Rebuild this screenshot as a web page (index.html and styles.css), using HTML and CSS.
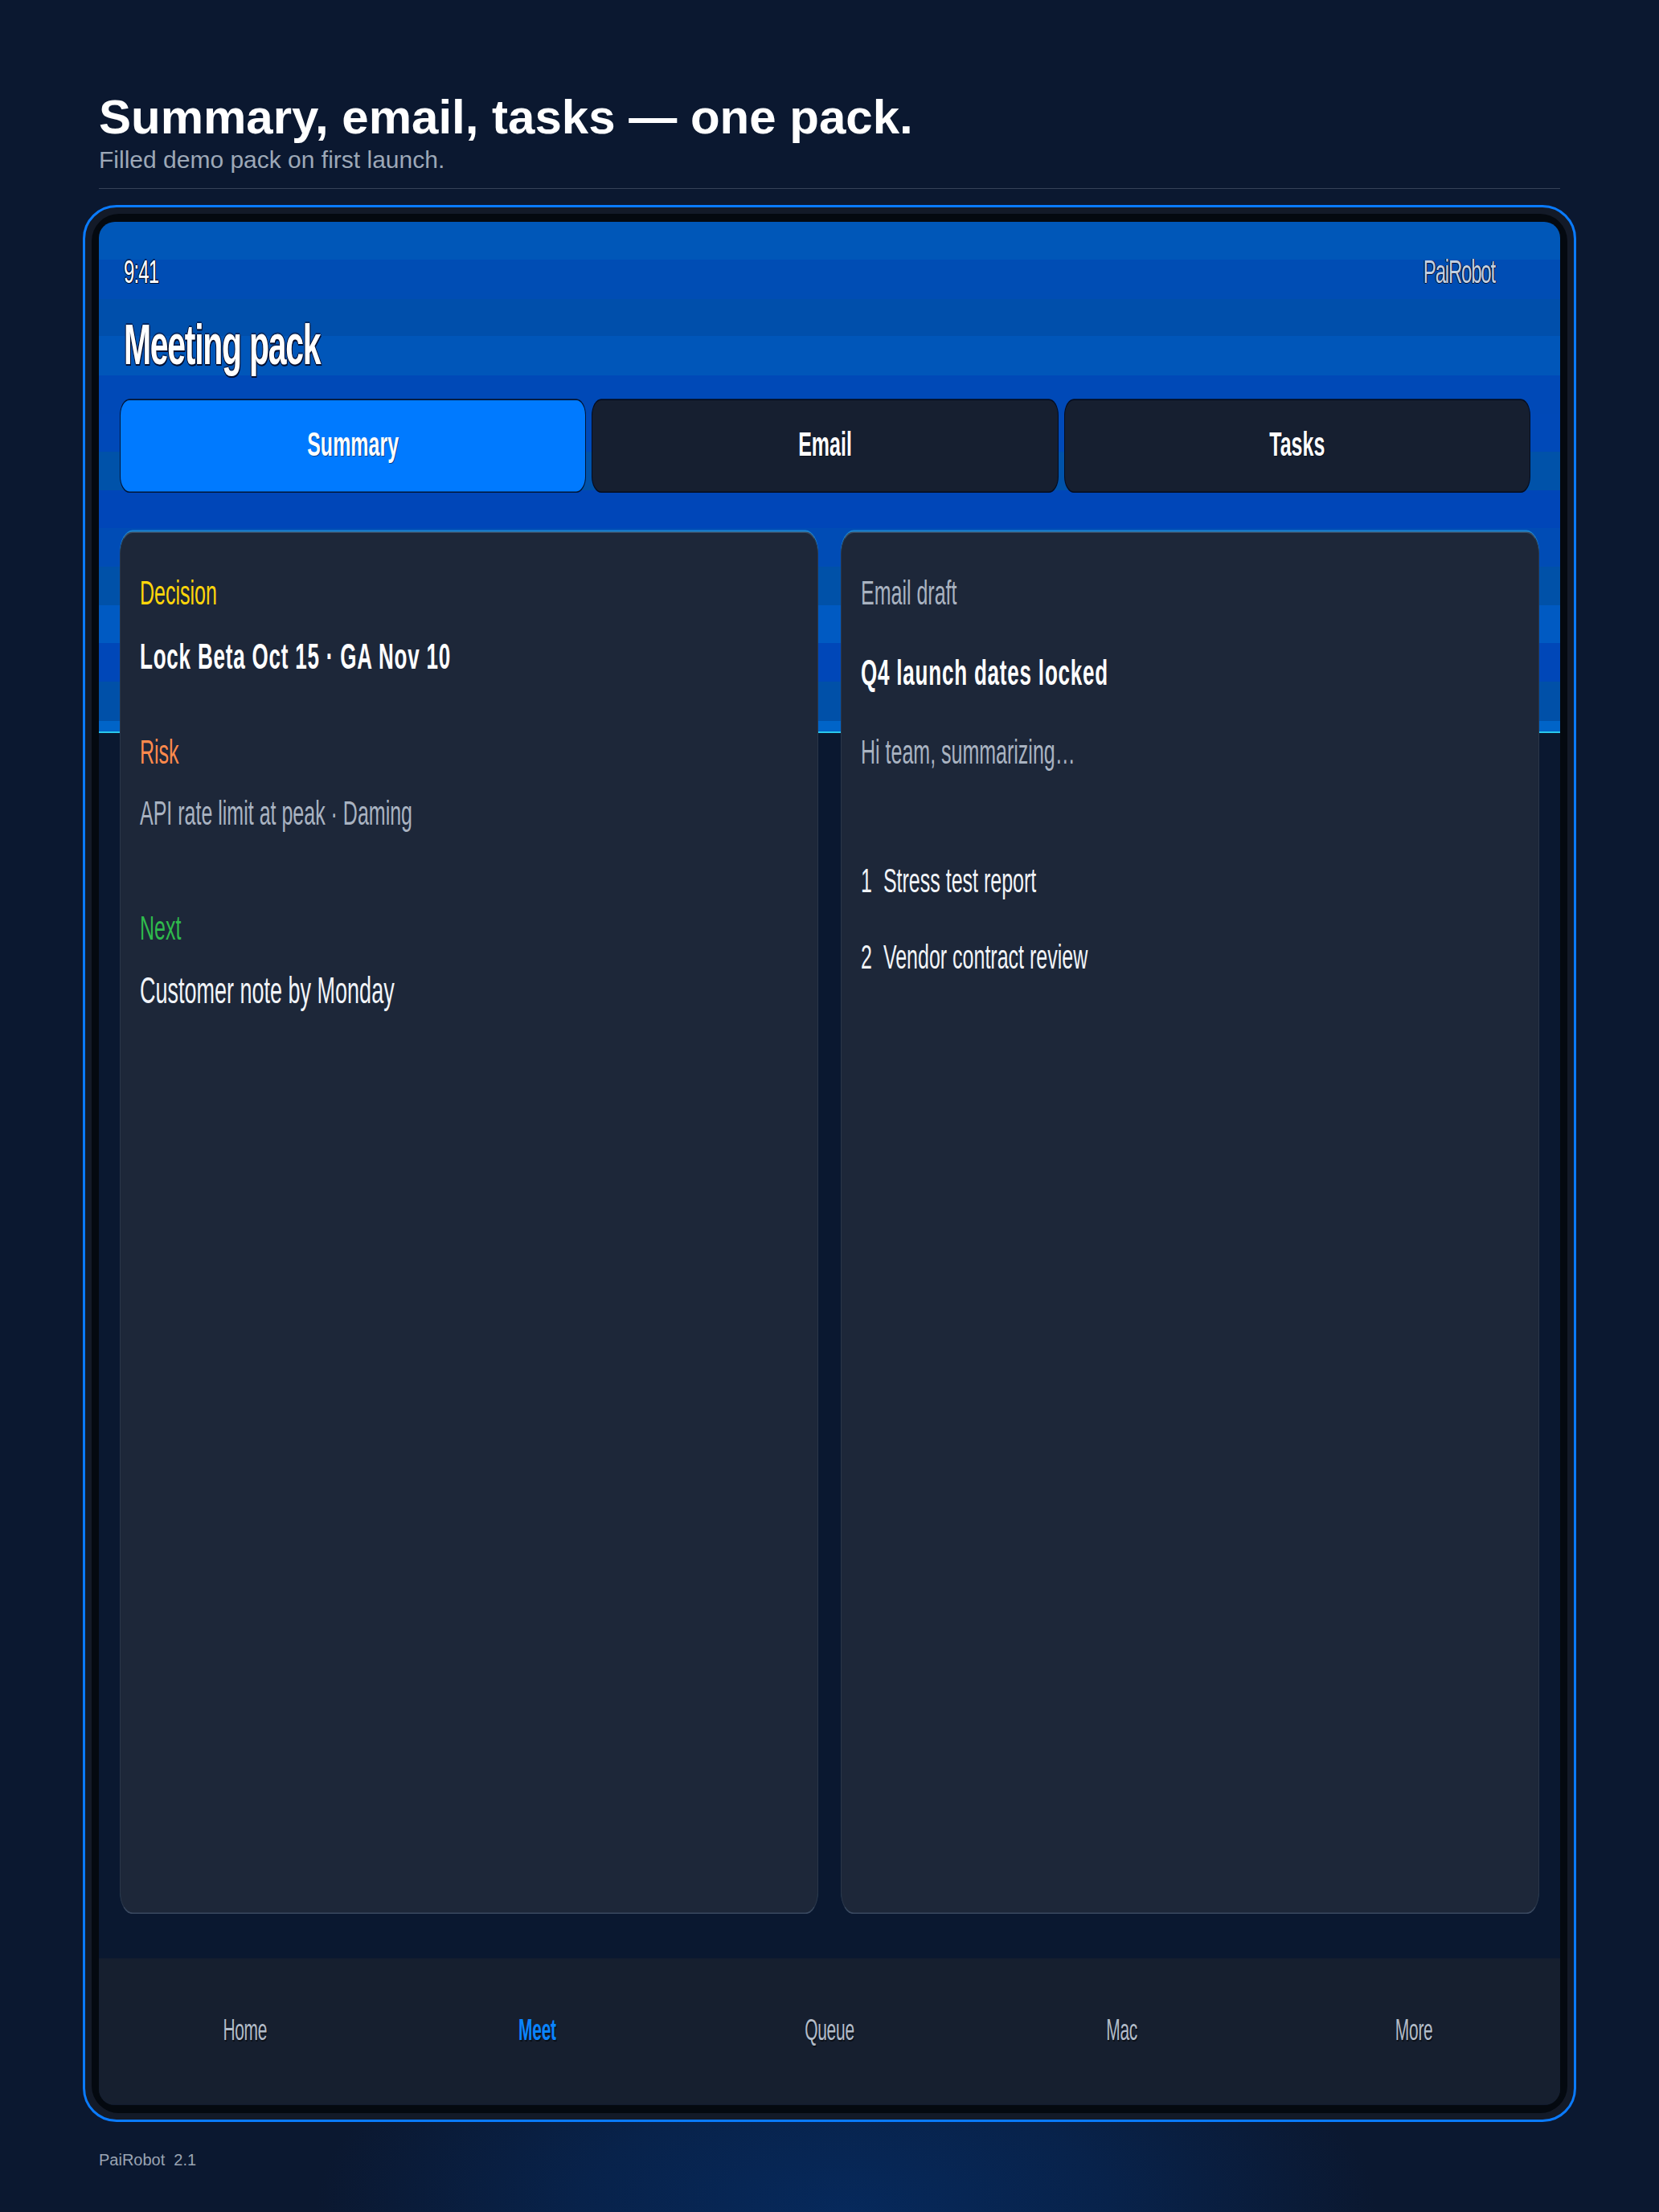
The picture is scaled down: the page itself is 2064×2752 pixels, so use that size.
FILE: index.html
```html
<!DOCTYPE html>
<html lang="en">
<head>
<meta charset="utf-8">
<title>Meeting pack</title>
<link rel="stylesheet" href="styles.css">
</head>
<body>
<main class="page">
  <header class="intro">
    <h1 class="headline">Summary, email, tasks — one pack.</h1>
    <p class="subline">Filled demo pack on first launch.</p>
  </header>
  <hr class="rule">
  <div class="frame">
    <div class="bezel">
      <div class="screen">
        <div class="app">
          <div class="app-head">
            <div class="status">
              <span class="time">9:41</span>
              <span class="brand">PaiRobot</span>
            </div>
            <div class="title">Meeting pack</div>
          </div>
          <nav class="tabs">
            <div class="tab is-active">Summary</div>
            <div class="tab">Email</div>
            <div class="tab">Tasks</div>
          </nav>
          <section class="cards">
            <article class="card">
              <div class="line label-decision">Decision</div>
              <div class="line strong lock">Lock Beta Oct 15 · GA Nov 10</div>
              <div class="line label-risk">Risk</div>
              <div class="line muted api">API rate limit at peak · Daming</div>
              <div class="line label-next">Next</div>
              <div class="line customer">Customer note by Monday</div>
            </article>
            <article class="card">
              <div class="line muted">Email draft</div>
              <div class="line strong subject">Q4 launch dates locked</div>
              <div class="line muted greeting">Hi team, summarizing…</div>
              <div class="line task task-first"><span class="task-num">1</span><span>Stress test report</span></div>
              <div class="line task task-next"><span class="task-num">2</span><span>Vendor contract review</span></div>
            </article>
          </section>
          <nav class="navbar">
            <span class="nav-item">Home</span>
            <span class="nav-item is-current">Meet</span>
            <span class="nav-item">Queue</span>
            <span class="nav-item">Mac</span>
            <span class="nav-item">More</span>
          </nav>
        </div>
      </div>
    </div>
  </div>
  <footer class="footer"><span>PaiRobot</span><span class="version">2.1</span></footer>
</main>
</body>
</html>
```

FILE: styles.css
```css
* {
  box-sizing: border-box;
}

html {
  background: #0b1830;
}

body {
  margin: 0;
  min-height: 2752px;
  font-family: "Liberation Sans", Arial, sans-serif;
  color: #ffffff;
  background-color: #0b1830;
  background-image: radial-gradient(ellipse 660px 300px at 51% 100%, rgba(6, 42, 94, 0.95) 0%, rgba(7, 38, 84, 0.75) 50%, rgba(11, 24, 48, 0) 100%);
}

.page {
  width: 1818px;
  margin: 0 auto;
  padding-top: 111px;
}

.headline {
  margin: 0;
  font-size: 60px;
  line-height: 70px;
  font-weight: 700;
  color: #ffffff;
}

.subline {
  margin: 0;
  font-size: 30px;
  line-height: 36px;
  color: #9da8b7;
}

.rule {
  margin: 17px 0 0;
  height: 0;
  border: 0;
  border-top: 1px solid #364257;
}

/* device frame */
.frame {
  margin: 20px -20px 0;
  border: 3px solid #0a7bff;
  border-radius: 42px;
  background: #131a28;
  padding: 8px;
}

.bezel {
  background: #040910;
  border-radius: 34px;
  padding: 10px 9px;
}

.screen {
  height: 2343px;
  border-radius: 20px;
  overflow: hidden;
  background: linear-gradient(to bottom,
    #0057b8 0, #0057b8 47px,
    #004db4 47px, #004db4 96px,
    #004fab 96px, #004fab 142px,
    #0056b9 142px, #0056b9 191px,
    #0049b7 191px, #0049b7 239px,
    #0049b8 239px, #0049b8 286px,
    #0052a9 286px, #0052a9 334px,
    #0046b8 334px, #0046b8 381px,
    #004cb5 381px, #004cb5 429px,
    #0051a8 429px, #0051a8 477px,
    #005ac2 477px, #005ac2 524px,
    #0047b8 524px, #0047b8 572px,
    #0050a8 572px, #0050a8 621px,
    #0064c8 621px, #0064c8 634px,
    #2ac8ec 634px, #2ac8ec 636px,
    #0a1830 636px, #0a1830 100%);
}

/* the app is rendered stretched vertically inside the screen */
.app {
  height: 1362px;
  display: flex;
  flex-direction: column;
  transform: scaleY(1.72);
  transform-origin: 0 0;
}

.app-head {
  padding: 21px 81px 0 31px;
}

.status {
  display: flex;
  justify-content: space-between;
  font-size: 24px;
  line-height: 30px;
}

.time {
  color: #ffffff;
  letter-spacing: -0.9px;
  text-shadow: -1px 0 0 #021236, 1px 0 0 #021236, 0 1px 0 #021236, 1px 1px 0 #021236, 0 -1px 0 rgba(2, 18, 54, 0.7);
}

.brand {
  color: #c3cfe0;
  letter-spacing: -1.2px;
  text-shadow: -1px 0 0 #021236, 1px 0 0 #021236, 0 1px 0 #021236;
}

.title {
  margin-top: 14px;
  font-size: 41px;
  line-height: 48px;
  font-weight: 700;
  letter-spacing: -1.3px;
  color: #ffffff;
  text-shadow: -1px 0 0 #020f30, 1px 0 0 #020f30, 0 1px 0 #020f30, 1px 1px 0 #020f30, 0 -1px 0 rgba(2, 15, 48, 0.6);
}

.tabs {
  display: flex;
  gap: 7px;
  margin: 15px 37px 0 26px;
}

.tab {
  flex: 1;
  height: 68px;
  padding-top: 19px;
  border: 1px solid rgba(2, 10, 30, 0.9);
  border-radius: 12px;
  background: #161f30;
  color: #ffffff;
  font-size: 25px;
  line-height: 25px;
  font-weight: 700;
  text-align: center;
  text-shadow: 1px 1px 0 rgba(0, 0, 0, 0.45);
}

.tab.is-active {
  background: #007aff;
}

.cards {
  flex: 1;
  display: grid;
  grid-template-columns: 1fr 1fr;
  gap: 28px;
  margin: 28px 26px 32px;
}

.card {
  background: #1d2739;
  border: 1px solid #2a3649;
  border-top-color: #3c4b61;
  border-bottom-color: #3a4960;
  border-radius: 16px;
  padding: 28px 24px 0;
  box-shadow: 0 -1px 0 rgba(64, 206, 240, 0.45);
}

.line {
  font-size: 25px;
  line-height: 30px;
  color: #f1f4f8;
  white-space: nowrap;
}

.strong {
  font-size: 26px;
  font-weight: 700;
  letter-spacing: 0.8px;
  color: #ffffff;
}

.muted {
  color: #a9b3c1;
}

.label-decision {
  color: #ffd60a;
}

.label-risk {
  margin-top: 39px;
  color: #ff8a4c;
}

.label-next {
  margin-top: 53px;
  color: #2fba4c;
}

.lock {
  margin-top: 16px;
}

.api {
  margin-top: 14px;
}

.customer {
  margin-top: 16px;
  font-size: 27px;
}

.subject {
  margin-top: 28px;
}

.greeting {
  margin-top: 27px;
}

.task {
  display: flex;
}

.task-first {
  margin-top: 63px;
}

.task-next {
  margin-top: 25px;
}

.task-num {
  margin-right: 14px;
}

.navbar {
  height: 106px;
  padding-top: 37px;
  background: #161f2f;
  display: grid;
  grid-template-columns: repeat(5, 1fr);
}

.nav-item {
  text-align: center;
  font-size: 21px;
  line-height: 30px;
  letter-spacing: -0.3px;
  color: #b2bcc9;
  text-shadow: 1px 1px 0 rgba(0, 0, 0, 0.5);
}

.nav-item.is-current {
  color: #0a84ff;
  font-weight: 700;
}

.footer {
  margin-top: 35px;
  font-size: 20px;
  line-height: 24px;
  color: #9aa4b3;
}

.version {
  margin-left: 11px;
}
```
